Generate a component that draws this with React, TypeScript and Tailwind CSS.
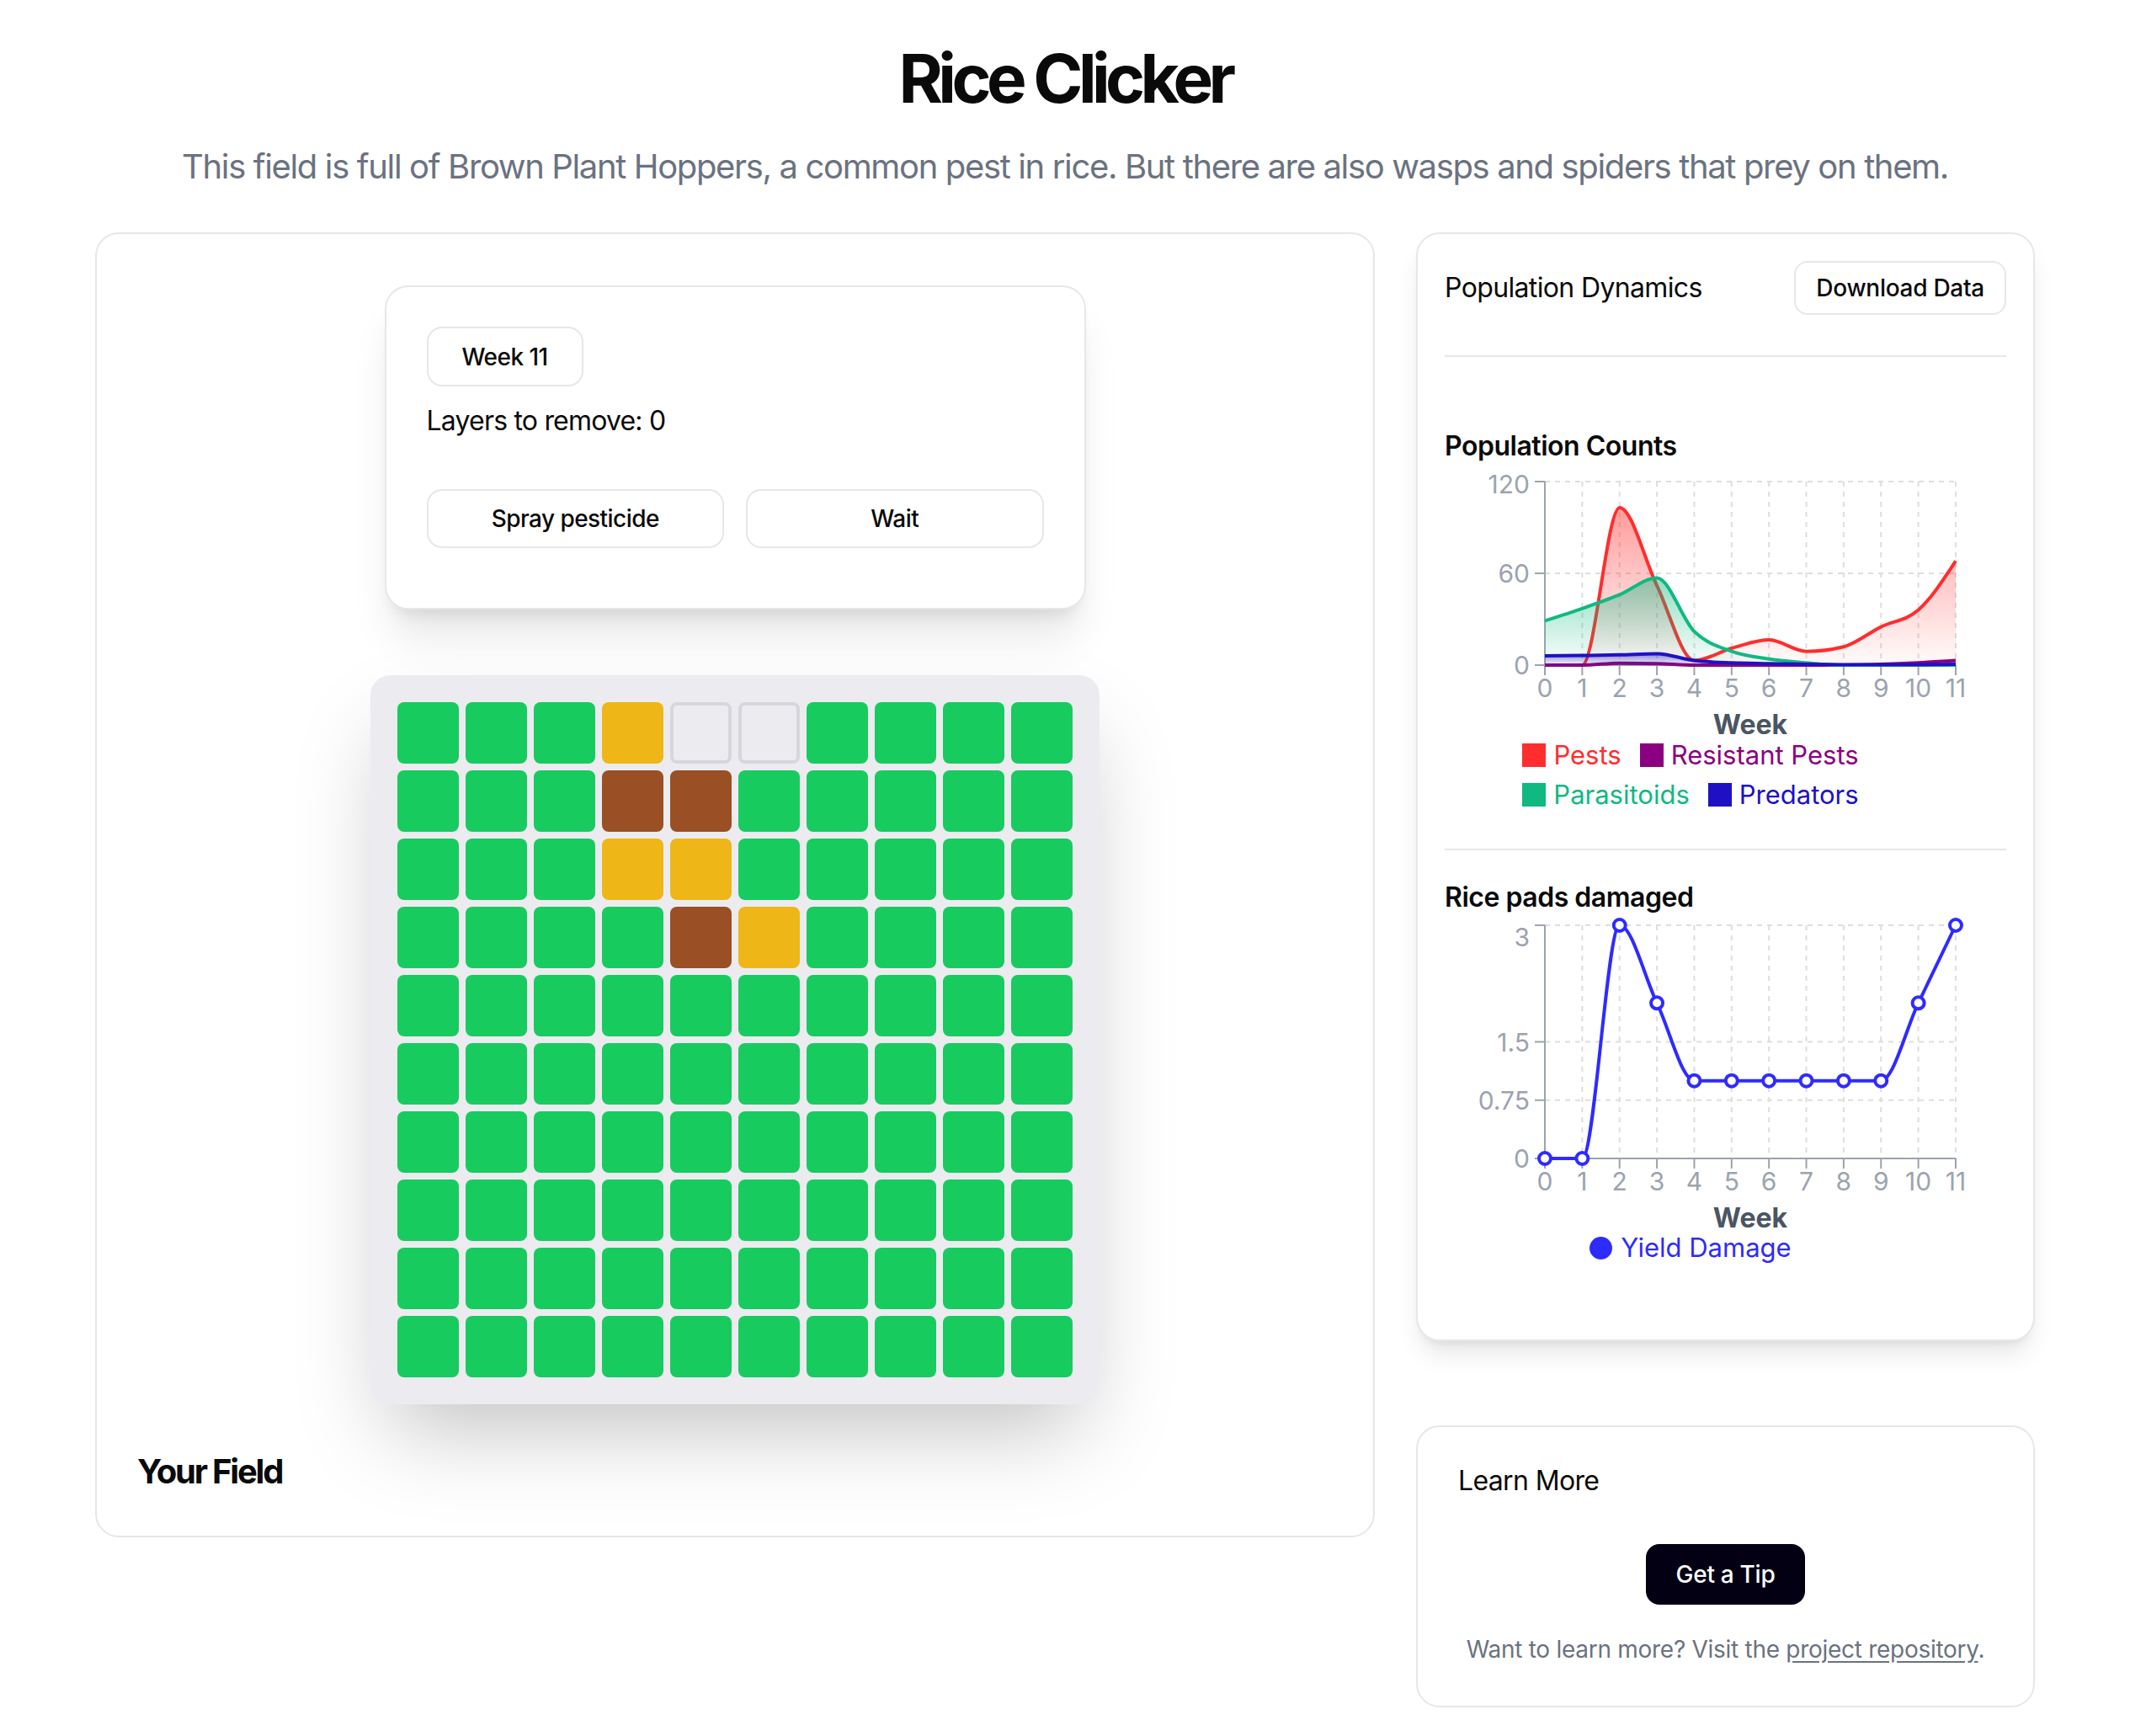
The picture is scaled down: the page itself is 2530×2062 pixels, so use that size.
import React from "react";

type Cell = "g" | "y" | "b" | "e";

const field: Cell[][] = [
  ["g", "g", "g", "y", "e", "e", "g", "g", "g", "g"],
  ["g", "g", "g", "b", "b", "g", "g", "g", "g", "g"],
  ["g", "g", "g", "y", "y", "g", "g", "g", "g", "g"],
  ["g", "g", "g", "g", "b", "y", "g", "g", "g", "g"],
  ["g", "g", "g", "g", "g", "g", "g", "g", "g", "g"],
  ["g", "g", "g", "g", "g", "g", "g", "g", "g", "g"],
  ["g", "g", "g", "g", "g", "g", "g", "g", "g", "g"],
  ["g", "g", "g", "g", "g", "g", "g", "g", "g", "g"],
  ["g", "g", "g", "g", "g", "g", "g", "g", "g", "g"],
  ["g", "g", "g", "g", "g", "g", "g", "g", "g", "g"],
];

const cellClass: Record<Cell, string> = {
  g: "bg-[#18cb5f]",
  y: "bg-[#efb617]",
  b: "bg-[#9a4f24]",
  e: "border-4 border-[#d6d6dc] bg-[#ececf0]",
};

const weeks = Array.from({ length: 12 }, (_, i) => i);
const X0 = 119;
const STEP = 44.36;
const xAt = (i: number) => X0 + i * STEP;

// d3 curveMonotoneX
function sign(x: number) {
  return x < 0 ? -1 : 1;
}
function monotone(pts: [number, number][]) {
  const n = pts.length;
  const s: number[] = [];
  for (let i = 0; i < n - 1; i++)
    s.push((pts[i + 1][1] - pts[i][1]) / (pts[i + 1][0] - pts[i][0]));
  const t: number[] = new Array(n).fill(0);
  for (let i = 1; i < n - 1; i++) {
    const h0 = pts[i][0] - pts[i - 1][0];
    const h1 = pts[i + 1][0] - pts[i][0];
    const p = (s[i - 1] * h1 + s[i] * h0) / (h0 + h1);
    t[i] =
      (sign(s[i - 1]) + sign(s[i])) *
        Math.min(Math.abs(s[i - 1]), Math.abs(s[i]), 0.5 * Math.abs(p)) || 0;
  }
  t[0] = (3 * s[0] - t[1]) / 2;
  t[n - 1] = (3 * s[n - 2] - t[n - 2]) / 2;
  let d = `M${pts[0][0]},${pts[0][1]}`;
  for (let i = 0; i < n - 1; i++) {
    const [x0, y0] = pts[i];
    const [x1, y1] = pts[i + 1];
    const dx = (x1 - x0) / 3;
    d += `C${x0 + dx},${y0 + dx * t[i]},${x1 - dx},${y1 - dx * t[i + 1]},${x1},${y1}`;
  }
  return d;
}

type Series = { id: string; color: string; data: number[]; area?: boolean; dots?: boolean };
type Tick = { v: number; label: string; dy?: number };

function Chart({
  height,
  top,
  zero,
  max,
  ticks,
  series,
}: {
  height: number;
  top: number;
  zero: number;
  max: number;
  ticks: Tick[];
  series: Series[];
}) {
  const y = (v: number) => zero - (v / max) * (zero - top);
  const grid = "#dedede";
  const axis = "#9ca3af";
  return (
    <svg width={667} height={height} className="block overflow-visible font-['Inter',sans-serif]">
      <defs>
        {series
          .filter((s) => s.area)
          .map((s) => (
            <linearGradient key={s.id} id={s.id} x1="0" y1="0" x2="0" y2="1">
              <stop offset="5%" stopColor={s.color} stopOpacity={0.45} />
              <stop offset="95%" stopColor={s.color} stopOpacity={0.04} />
            </linearGradient>
          ))}
      </defs>
      {ticks
        .filter((t) => t.v > 0)
        .map((t) => (
          <line key={t.v} x1={X0} x2={xAt(11)} y1={y(t.v)} y2={y(t.v)} stroke={grid} strokeWidth={2} strokeDasharray="6 6" />
        ))}
      {weeks.slice(1).map((i) => (
        <line key={i} x1={xAt(i)} x2={xAt(i)} y1={top} y2={zero} stroke={grid} strokeWidth={2} strokeDasharray="6 6" />
      ))}
      <line x1={X0} x2={X0} y1={top} y2={zero} stroke={axis} strokeWidth={2} />
      <line x1={X0} x2={xAt(11)} y1={zero} y2={zero} stroke={axis} strokeWidth={2} />
      {ticks.map((t) => (
        <g key={t.v}>
          <line x1={X0 - 12} x2={X0} y1={y(t.v)} y2={y(t.v)} stroke={axis} strokeWidth={2} />
          <text x={101} y={y(t.v) + 11 + (t.dy ?? 0)} textAnchor="end" fontSize={30} fill="#9ca3af">
            {t.label}
          </text>
        </g>
      ))}
      {weeks.map((i) => (
        <g key={i}>
          <line x1={xAt(i)} x2={xAt(i)} y1={zero} y2={zero + 12} stroke={axis} strokeWidth={2} />
          <text x={xAt(i)} y={zero + 38} textAnchor="middle" fontSize={30} fill="#9ca3af">
            {i}
          </text>
        </g>
      ))}
      <text x={(X0 + xAt(11)) / 2} y={zero + 82} textAnchor="middle" fontSize={32} fontWeight={700} fill="#4b5563">
        Week
      </text>
      {series.map((s) => {
        const pts = s.data.map((v, i) => [xAt(i), y(v)] as [number, number]);
        const d = monotone(pts);
        return (
          <g key={s.id}>
            {s.area && <path d={`${d}L${xAt(11)},${zero}L${X0},${zero}Z`} fill={`url(#${s.id})`} />}
            <path d={d} fill="none" stroke={s.color} strokeWidth={4} />
            {s.dots &&
              pts.map(([px, py], i) => (
                <circle key={i} cx={px} cy={py} r={7} fill="#fff" stroke={s.color} strokeWidth={4} />
              ))}
          </g>
        );
      })}
    </svg>
  );
}

function LegendSquare({ box, text, label }: { box: string; text: string; label: string }) {
  return (
    <span className={`flex items-center gap-[9px] ${text}`}>
      <span className={`h-7 w-7 ${box}`} />
      <span>{label}</span>
    </span>
  );
}

function FieldCard() {
  return (
    <div className="flex w-[1520px] flex-col items-center rounded-[28px] border-2 border-[#e5e7eb] bg-white px-12 pb-12 pt-[61px]">
      <div className="w-[833px] rounded-[28px] border-2 border-[#e5e7eb] bg-white px-12 pb-[71px] pt-[47px] shadow-[0_40px_50px_-10px_rgba(0,0,0,0.1),0_16px_20px_-12px_rgba(0,0,0,0.1)]">
        <div className="flex">
          <button className="h-[71px] rounded-[18px] border-2 border-[#e5e7eb] bg-white px-10 text-[28px] font-medium tracking-[-0.02em]">
            Week 11
          </button>
        </div>
        <p className="mt-[17px] text-[32px] leading-[48px] tracking-[-0.025em]">Layers to remove: 0</p>
        <div className="mt-[57px] grid grid-cols-2 gap-[26px]">
          <button className="h-[70px] rounded-[18px] border-2 border-[#e5e7eb] bg-white text-[28px] font-medium tracking-[-0.02em]">
            Spray pesticide
          </button>
          <button className="h-[70px] rounded-[18px] border-2 border-[#e5e7eb] bg-white text-[28px] font-medium tracking-[-0.02em]">
            Wait
          </button>
        </div>
      </div>
      <div className="mt-[78px] grid grid-cols-10 gap-2 rounded-[24px] bg-[#ececf0] p-8 shadow-[0_50px_100px_-24px_rgba(0,0,0,0.25)]">
        {field.flat().map((c, i) => (
          <div key={i} className={`h-[73px] w-[73px] rounded-[8px] ${cellClass[c]}`} />
        ))}
      </div>
      <h2 className="mt-[52px] self-start text-[40px] font-bold leading-[56px] tracking-[-0.055em]">Your Field</h2>
    </div>
  );
}

function DynamicsCard() {
  return (
    <div className="rounded-[28px] border-2 border-[#e5e7eb] bg-white p-8 shadow-[0_20px_30px_-6px_rgba(0,0,0,0.1),0_8px_12px_-8px_rgba(0,0,0,0.1)]">
      <div className="flex h-16 items-center justify-between">
        <h2 className="text-[32px] leading-none tracking-[-0.02em]">Population Dynamics</h2>
        <button className="h-16 rounded-[16px] border-2 border-[#e5e7eb] bg-white px-6 text-[28px] font-medium tracking-[-0.01em]">
          Download Data
        </button>
      </div>
      <div className="mt-12 h-[2px] bg-[#e5e7eb]" />
      <h3 className="mt-[82px] text-[32px] font-semibold leading-[48px] tracking-[-0.015em]">Population Counts</h3>
      <Chart
        height={319}
        top={18}
        zero={236}
        max={120}
        ticks={[
          { v: 0, label: "0" },
          { v: 60, label: "60" },
          { v: 120, label: "120", dy: 3 },
        ]}
        series={[
          { id: "pests", color: "#ff2d2d", area: true, data: [0, 0, 103, 52, 3, 11, 16.5, 9, 12, 25, 36, 68] },
          { id: "resistant", color: "#8b0080", area: true, data: [0, 0, 1.3, 1, 0, 0, 0, 0, 0, 0.5, 1.5, 3] },
          { id: "parasitoids", color: "#10b981", area: true, data: [29, 37, 46, 57, 22, 9, 4, 1.5, 0, 0, 0, 0] },
          { id: "predators", color: "#2010c4", area: true, data: [6, 6.3, 6.7, 7.5, 3, 1.5, 1, 0.5, 0.3, 0.3, 0.3, 0.5] },
        ]}
      />
      <div className="w-[584px] text-[31px] leading-[47px]">
        <div className="flex justify-center gap-[22px]">
          <LegendSquare box="bg-[#ff2d2d]" text="text-[#ff2d2d]" label="Pests" />
          <LegendSquare box="bg-[#8b0080]" text="text-[#8b0080]" label="Resistant Pests" />
        </div>
        <div className="flex justify-center gap-[22px]">
          <LegendSquare box="bg-[#10b981]" text="text-[#10b981]" label="Parasitoids" />
          <LegendSquare box="bg-[#2010c4]" text="text-[#2010c4]" label="Predators" />
        </div>
      </div>
      <div className="mt-[41px] h-[2px] bg-[#e5e7eb]" />
      <h3 className="mt-8 text-[32px] font-semibold leading-[48px] tracking-[-0.015em]">Rice pads damaged</h3>
      <Chart
        height={368}
        top={9}
        zero={286}
        max={3}
        ticks={[
          { v: 0, label: "0" },
          { v: 0.75, label: "0.75" },
          { v: 1.5, label: "1.5" },
          { v: 3, label: "3", dy: 14 },
        ]}
        series={[{ id: "yield", color: "#2e2bff", dots: true, data: [0, 0, 3, 2, 1, 1, 1, 1, 1, 1, 2, 3] }]}
      />
      <div className="flex w-[584px] justify-center text-[31px] leading-[48px] text-[#2e2bff]">
        <span className="flex items-center gap-[10px]">
          <span className="h-[27px] w-[27px] rounded-full bg-[#2e2bff]" />
          <span>Yield Damage</span>
        </span>
      </div>
      <div className="h-[53px]" />
    </div>
  );
}

function LearnCard() {
  return (
    <div className="flex flex-col rounded-[28px] border-2 border-[#e5e7eb] bg-white px-12 pb-[47px] pt-12">
      <h2 className="text-[32px] leading-none tracking-[-0.02em]">Learn More</h2>
      <button className="mx-auto mt-[59px] h-[72px] rounded-[16px] bg-[#030014] px-[36px] text-[28px] font-medium tracking-[-0.01em] text-white">
        Get a Tip
      </button>
      <p className="mt-[33px] text-center text-[28px] leading-[40px] tracking-[-0.01em] text-[#6b7280]">
        Want to learn more? Visit the{" "}
        <a href="#" className="underline underline-offset-4">
          project repository
        </a>
        .
      </p>
    </div>
  );
}

export default function App() {
  return (
    <div className="min-h-screen bg-white font-['Inter',sans-serif] text-[#0a0a0a]">
      <header className="pt-[53px] text-center">
        <h1 className="text-[80px] font-bold leading-[80px] tracking-[-0.07em]">Rice Clicker</h1>
        <p className="mt-[37px] text-[40px] leading-[56px] tracking-[-0.034em] text-[#6b7280]">
          This field is full of Brown Plant Hoppers, a common pest in rice. But there are also wasps and spiders that prey on them.
        </p>
      </header>
      <main className="mx-auto mt-[50px] flex w-[2304px] items-start gap-[49px]">
        <FieldCard />
        <div className="flex flex-1 flex-col gap-[100px]">
          <DynamicsCard />
          <LearnCard />
        </div>
      </main>
    </div>
  );
}
